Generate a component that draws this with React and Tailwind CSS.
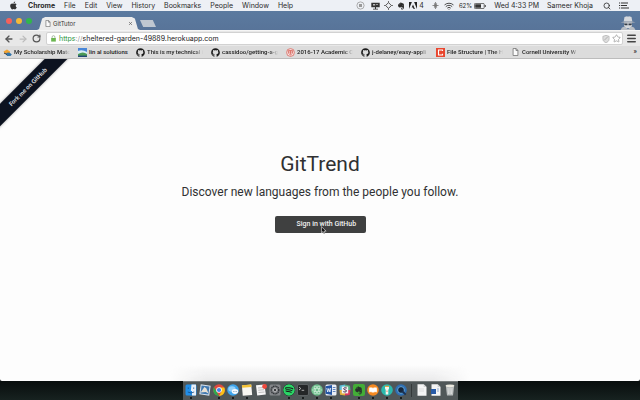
import React from "react";
import { FaApple, FaGithub, FaSpotify, FaEvernote, FaSlack } from "react-icons/fa";
import { ArrowLeft, ArrowRight, RotateCw, Star, Menu, Search, List, Wifi, X } from "lucide-react";

const menus = ["File", "Edit", "View", "History", "Bookmarks", "People", "Window", "Help"];

function PageIcon({ className = "" }) {
  return (
    <svg viewBox="0 0 8 10" className={className} fill="#fafafa" stroke="#666" strokeWidth="0.9">
      <path d="M1 .6h3.8L7 2.9v6.5H1zM4.6.8v2.3H7" />
    </svg>
  );
}

function MenuBar() {
  return (
    <header className="flex h-[11px] shrink-0 items-center justify-between bg-[#edf0f5] pl-[9px] pr-[11px] text-[7px] leading-none text-[#2a2a2a]">
      <nav className="flex items-center gap-[9px]">
        <button aria-label="Apple menu" className="mr-[1px] text-[#333]"><FaApple size={9} /></button>
        <button className="font-bold">Chrome</button>
        {menus.map((m) => <button key={m}>{m}</button>)}
      </nav>
      <div className="flex items-center gap-2">
        <div className="flex items-center gap-1">
          <svg viewBox="0 0 9 9" className="size-[9px]" fill="none" stroke="#999" strokeWidth=".8">
            <circle cx="4.5" cy="4.5" r="3.6" /><path fill="#999" stroke="none" d="M3 3h3v3H3z" />
          </svg>
          <svg viewBox="0 0 9 8" className="ml-[2px] h-2 w-[9px]" fill="#333">
            <path d="M.3.8h8.4v4.5H.3zM4 5.3h1v1.4H4zM2 6.7h5v.8H2z" />
            <path d="M2 2h2.2v1.5H2zM5 2h2v.7H5z" fill="#bbb" />
          </svg>
          <svg viewBox="0 0 9 9" className="size-[9px]" fill="none" stroke="#555" strokeWidth="1">
            <path d="M4.5 1.6 7.4 4.5 4.5 7.4 1.6 4.5z" /><path d="M4.5.2v1.4M4.5 7.4v1.4M.2 4.5h1.4M7.4 4.5h1.4" />
          </svg>
          <FaEvernote size={8} />
          <span className="flex items-center gap-[2px]">
            <svg viewBox="0 0 8 7" className="h-[7px] w-2" fill="#222">
              <path d="M0 0h2.9L0 7zM8 0H5.1L8 7zM4 2.5 5.9 7H4.6L4 5.5H2.7z" />
            </svg>
            4
          </span>
        </div>
        <div className="flex items-center gap-[5px]">
          <svg viewBox="0 0 8 8" className="size-[7px]" fill="none" stroke="#777" strokeWidth=".9">
            <path d="M4 .5v7M.5 4h7M2.5 2 4 .5 5.5 2M2.5 6 4 7.5 5.5 6" /><circle cx="4" cy="4" r="1.5" fill="#777" />
          </svg>
          <Wifi size={10} strokeWidth={2} />
          <div className="flex items-center gap-[2px] text-[6px]">
            62%
            <svg viewBox="0 0 12 6" className="h-[6px] w-3">
              <rect x=".4" y=".4" width="9.8" height="5.2" rx="1" fill="none" stroke="#444" strokeWidth=".8" />
              <path d="M1.2 1.2h5.8v3.6H1.2zM10.8 2h.9v2h-.9z" fill="#333" />
            </svg>
          </div>
        </div>
        <span>Wed 4:33 PM</span>
        <span>Sameer Khoja</span>
        <button aria-label="Search" className="ml-[2px]"><Search size={8} strokeWidth={2.4} /></button>
        <button aria-label="Notifications">
          <svg viewBox="0 0 10 7" className="h-[7px] w-[10px]" stroke="#333" strokeWidth="1">
            <path d="M0 1h1.2M2 1h7M0 3.5h1.2M2 3.5h6M0 6h1.2M2 6h8" />
          </svg>
        </button>
      </div>
    </header>
  );
}

function TabStrip() {
  return (
    <div className="flex h-[19px] shrink-0 items-end bg-linear-to-b from-[#5b7a9f] to-[#587499] pl-[6px] pr-1">
      <div className="mb-[6px] flex gap-1">
        <button aria-label="Close window" className="size-[6px] rounded-full bg-[#f5615b]" />
        <button aria-label="Minimise window" className="size-[6px] rounded-full bg-[#f5b938]" />
        <button aria-label="Zoom window" className="size-[6px] rounded-full bg-[#31b54c]" />
      </div>
      <div className="ml-[5px] flex h-[13px] w-[103px] items-center bg-[#ececec] pl-2 pr-[7px] text-[6px] text-[#333] [clip-path:polygon(0_100%,2%_92%,5%_12%,8%_0,92%_0,95%_12%,98%_92%,100%_100%)]">
        <PageIcon className="h-[7px] w-[6px]" />
        <span className="ml-[2px] flex-1">GitTutor</span>
        <button aria-label="Close tab"><X size={5} strokeWidth={3} className="text-[#555]" /></button>
      </div>
      <button aria-label="New tab" className="mb-[3px] h-[7px] w-4 bg-[#bfc7d1] [clip-path:polygon(0_0,80%_0,100%_100%,20%_100%)]" />
      <svg viewBox="0 0 16 14" className="ml-auto h-[14px] w-4">
        <path d="M4.5 1 7 .3l1 .5 1-.5 2.5.7.8 4.5H3.7z" fill="#d5d8dc" />
        <path d="M.5 6.2Q8 4.2 15.5 6.2 8 7.6.5 6.2z" fill="#aeb3ba" />
        <path d="M4 6.8h8v3L10.5 12h-5L4 9.8z" fill="#d5d8dc" />
        <path d="M4 7.5h3.5v1.7H4.6zM8.5 7.5H12l-.6 1.7H8.5z" fill="#333b46" />
        <path d="M.5 14 2 11.5l2.5-1L8 13l3.5-2.5 2.5 1 1.5 2.5z" fill="#b8bdc4" />
      </svg>
    </div>
  );
}

function Toolbar() {
  return (
    <div className="flex h-4 shrink-0 items-center border-t border-[#f5f5f5] bg-[#e8e8e8] pl-1 pr-[3px] text-[#555]">
      <button aria-label="Back"><ArrowLeft size={10} strokeWidth={3.2} /></button>
      <button aria-label="Forward" className="ml-1 text-[#bbb]"><ArrowRight size={10} strokeWidth={3} /></button>
      <button aria-label="Reload" className="ml-1"><RotateCw size={9} strokeWidth={3.2} /></button>
      <div className="ml-[5px] flex h-[13px] flex-1 items-center rounded-[2px] border border-[#d2d2d2] bg-white pl-1 pr-[1px] text-[7px] leading-none">
        <svg viewBox="0 0 6 8" className="h-[7px] w-[5px]">
          <path d="M1.3 4V2.3a1.7 1.7 0 0 1 3.4 0V4" fill="none" stroke="#8fa98a" strokeWidth=".9" />
          <path d="M.2 3.4h5.6v4.3H.2z" fill="#6cb651" />
        </svg>
        <a href="https://sheltered-garden-49889.herokuapp.com" className="ml-[3px] flex-1 text-[#222]">
          <span className="text-[#2a9440]">https</span><span className="text-[#999]">://</span>sheltered-garden-49889.herokuapp.com
        </a>
        <svg viewBox="0 0 8 9" className="h-2 w-2">
          <path d="M4 .4 7.5 1.5v3C7.5 6.8 5.8 8 4 8.7 2.2 8 .5 6.8.5 4.5v-3z" fill="#ddd" stroke="#aaa" strokeWidth=".7" />
          <path d="m2 6 4-4" stroke="#aaa" />
        </svg>
        <button aria-label="Bookmark this page" className="ml-[2px] text-[#999]"><Star size={9} strokeWidth={2} /></button>
      </div>
      <button aria-label="Chrome menu" className="ml-[3px] text-[#444]"><Menu size={11} strokeWidth={3.6} /></button>
    </div>
  );
}

const hub = <FaGithub size={9} className="text-[#1c1c1c]" />;
const bookmarks = [
  {
    label: "My Scholarship Matc", icon: (
      <svg viewBox="0 0 9 9" className="size-[9px]">
        <path d="M.5 3.5 4 1.5l3 2v2H2z" fill="#f2a330" /><path d="M3 5.5Q6 3 8.8 6.5L7.5 8H4z" fill="#3274a8" /><path d="m1 5 3 1.5" stroke="#333" />
      </svg>
    ),
  },
  {
    label: "lin al solutions", short: true, icon: (
      <svg viewBox="0 0 9 9" className="size-[9px]">
        <path d="M0 0h9v9H0z" fill="#4a86d8" /><path d="M0 3q4-2 9 1v2H0z" fill="#d9edf5" /><path d="M0 6q5-3 9 0v3H0z" fill="#4c9a56" /><path d="M0 7.6h9V9H0z" fill="#234877" />
      </svg>
    ),
  },
  { label: "This is my technical i", icon: hub },
  { label: "cassidoo/getting-a-g", icon: hub },
  {
    label: "2016-17 Academic C", icon: (
      <svg viewBox="0 0 9 9" className="size-[9px]" fill="none" stroke="#d8645c" strokeWidth=".8">
        <circle cx="4.5" cy="4.5" r="3.9" fill="#f8e6e4" /><path d="M2.4 2.5h4.2v2.7L4.5 7 2.4 5.2zM2.4 4h4.2M4.5 2.5v4" />
      </svg>
    ),
  },
  { label: "j-delaney/easy-appli", icon: hub },
  {
    label: "File Structure | The H", icon: (
      <svg viewBox="0 0 9 9" className="size-[9px]">
        <path d="M0 0h9v9H0z" fill="#e9472f" /><path d="M6.5 3V2h-4v5h4V5.8" fill="none" stroke="#fff" strokeWidth="1.1" />
      </svg>
    ),
  },
  { label: "Cornell University W", icon: <PageIcon className="h-2 w-[9px]" /> },
];

function Bookmarks() {
  return (
    <nav className="flex h-[13px] shrink-0 items-center gap-2 border-b border-[#bcbcbc] bg-[#dcdcdc] pl-[3px] pr-[3px] font-[Roboto,sans-serif] text-[6px] font-medium leading-none text-[#222]">
      {bookmarks.map((b) => (
        <a key={b.label} href="#" className="flex shrink-0 items-center gap-[2px]">
          {b.icon}
          {b.short ? (
            <span className="w-[39px] whitespace-nowrap">{b.label}</span>
          ) : (
            <span className="w-14 whitespace-nowrap py-[1px] [mask-image:linear-gradient(to_right,black_84%,transparent)]">{b.label}</span>
          )}
        </a>
      ))}
      <button aria-label="More bookmarks" className="ml-auto text-[7px]">»</button>
    </nav>
  );
}

function Page() {
  return (
    <main className="relative flex flex-1 flex-col items-center overflow-hidden rounded-b-[2px] bg-[#fdfdfd] pt-[91px] font-[Roboto,sans-serif] text-[#303132]">
      <a href="#" className="absolute -left-8 top-5 flex h-4 w-[120px] -rotate-45 items-center justify-center bg-[#0c1220] font-[Lato,sans-serif] text-[6px] font-bold leading-none text-[#e4e6ea] shadow-[0_0_3px_rgba(0,0,0,0.4)]">
        Fork me on GitHub
      </a>
      <h1 className="text-[21px] leading-7">GitTrend</h1>
      <p className="mt-1 text-[12px] leading-5">Discover new languages from the people you follow.</p>
      <button className="relative mt-[14px] flex h-[17px] w-[91px] items-center rounded-[2px] bg-[#3f4040] pl-[22px] text-[7px] font-medium leading-none text-[#f2f2f2]">
        Sign in with GitHub
        <svg viewBox="0 0 7 10" className="absolute left-[46px] top-[10px] h-[9px] w-[6px]">
          <path d="M.5.5v7.3l1.8-1.6 1.1 2.8 1.3-.6-1.1-2.6H6z" fill="#111" stroke="#eee" strokeWidth=".7" />
        </svg>
      </button>
      <div className="mt-auto h-4 w-[300px] bg-linear-to-b from-transparent to-[#e9e9ea] [mask-image:linear-gradient(to_right,transparent,black_12%,black_88%,transparent)]" />
    </main>
  );
}

const tile = (color, mark) => (
  <svg viewBox="0 0 12 12" className="size-3"><rect x=".5" y=".5" width="11" height="11" rx="1.5" fill={color} />{mark}</svg>
);
const disc = (color, mark) => (
  <svg viewBox="0 0 12 12" className="size-3"><circle cx="6" cy="6" r="5.8" fill={color} />{mark}</svg>
);

const apps = [
  ["Finder", tile("#218ee8", <><path d="M6.5.5H11v11H7V7H5.8z" fill="#e7eff8" /><path d="M3.3 3.5v1.3M8.7 3.5v1.3M2.8 8q3.2 2 6.4 0" stroke="#174b82" fill="none" strokeWidth=".8" /></>), true],
  ["Mail", <svg viewBox="0 0 12 12" className="size-3"><g transform="rotate(8 6 6)"><path d="M1 1h10v10H1z" fill="#d8e4ef" /><path d="M2 2h8v8H2z" fill="#4179b0" /><path d="m2 9 3-6 2 1 3 5-3-1z" fill="#e7e1d4" /></g></svg>],
  ["Chrome", disc("#e04a3f", <><path d="M1 3.1 6 12A6 6 0 0 1 1 3.1z" fill="#2da94f" /><path d="M6 12a6 6 0 0 0 5.3-8.5H6L8.5 7.5z" fill="#fbc116" /><circle cx="6" cy="6" r="2.8" fill="#fff" /><circle cx="6" cy="6" r="2.1" fill="#3f83ed" /></>), true],
  ["Messages", disc("#3da5ee", <><ellipse cx="5" cy="5" rx="3.7" ry="2.8" fill="#92d1fb" /><ellipse cx="8" cy="7.5" rx="3.2" ry="2.4" fill="#f5f9fc" /><path d="M6.3 7.5h3.4" stroke="#7da5c2" strokeDasharray=".8 .5" /></>), true],
  ["Notes", <svg viewBox="0 0 12 12" className="size-3"><g transform="rotate(-5 6 6)"><path d="M1.3 1h9.4v10.4H1.3z" fill="#f8f7f2" /><path d="M1.3.8h9.4v2.6H1.3z" fill="#f4c236" /></g></svg>, true],
  ["Reminders", <svg viewBox="0 0 12 12" className="size-3"><path d="M1 1.2 9.5.5l1.3 10-8.6 1z" fill="#f6f6f6" /><path d="m3 4 5-.4M3.2 6.2l6-.5M3.5 8.5l6-.5" stroke="#a5a5a5" strokeWidth=".7" /><circle cx="9.6" cy="2.5" r="2.4" fill="#ee493d" /></svg>],
  ["System Preferences", tile("#84878a", <><circle cx="6" cy="6" r="3.8" fill="none" stroke="#33373a" strokeWidth="1.5" strokeDasharray="1.2 .5" /><circle cx="6" cy="6" r="1.7" fill="#3a3d40" stroke="#ccc" strokeWidth=".7" /></>)],
  ["Spotify", <FaSpotify size={12} className="rounded-full bg-[#151c18] text-[#2bd466]" />, true],
  ["Terminal", tile("#242728", <><path d="m2 3 1.8 1.5L2 6M4.6 6.3h2.6" stroke="#d0d0d0" fill="none" strokeWidth=".8" /><rect x=".5" y=".5" width="11" height="11" rx="1.5" fill="none" stroke="#73787a" strokeWidth=".6" /></>), true],
  ["Atom", disc("#6fbf8d", <g fill="none" stroke="#d7f0df" strokeWidth=".6"><ellipse cx="6" cy="6" rx="4.5" ry="1.7" /><ellipse cx="6" cy="6" rx="4.5" ry="1.7" transform="rotate(60 6 6)" /><ellipse cx="6" cy="6" rx="4.5" ry="1.7" transform="rotate(120 6 6)" /></g>), true],
  ["Word", tile("#e9eef5", <><path d="M.5 2.2 7 1v10L.5 9.8z" fill="#2456a4" /><path d="m1.8 4 .9 4 1.1-3.5L4.9 8l.8-4" stroke="#fff" fill="none" strokeWidth=".8" /><path d="M7.8 3.5h2.7M7.8 5.5h2.7M7.8 7.5h2.7" stroke="#2456a4" strokeWidth=".7" /></>), true],
  ["Slack", (
    <svg viewBox="0 0 12 12" className="size-3">
      <path d="M.5 1.5 6 .5v5.5H.5z" fill="#5fc0d8" /><path d="m6 .5 5 1.2.5 4.3H6z" fill="#56b184" /><path d="M.5 6H6v5.5l-5-.8z" fill="#e2b03c" /><path d="M6 6h5.5l-.8 5-4.7.5z" fill="#d93a5d" />
      <path d="M2.8 2.6h6.4v6.8H2.8z" fill="#f4f2f2" /><path d="M7.8 4Q4.5 3.2 4.6 4.8C4.8 6.2 7.6 5.5 7.5 7 7.3 8.5 5 8 4.3 7.6" fill="none" stroke="#4b2f4d" strokeWidth="1" />
    </svg>
  )],
  ["Evernote", <span className="flex size-3 items-center justify-center rounded-[2px] bg-[#43ad37] text-[#26322a]"><FaEvernote size={9} /></span>, true],
  ["iBooks", disc("#f58a22", <path d="M2 3.8q2.2-1 4 .2 1.8-1.2 4-.2v4.5q-2.2-.8-4 .4-1.8-1.2-4-.4z" fill="#fff" stroke="#f7b36f" strokeWidth=".4" />), true],
  ["Flashlight", disc("#2bb9ad", <><path d="M4 3h4v1.5L7.3 6v4.5H4.7V6L4 4.5z" fill="#f4f5ed" /><path d="M4 1.8h4V3H4z" fill="#e1a845" /><path d="M5.6 6.5h.8v1.6h-.8z" fill="#d66a45" /></>), true],
  ["QuickTime", disc("#2f6fb4", <><circle cx="6" cy="6" r="3.4" fill="#17263c" stroke="#61a7dc" strokeWidth="1" /><path d="m7 7 3.7 3.7" stroke="#1b3050" strokeWidth="1.8" /></>), true],
];

const doc = (mark) => (
  <svg viewBox="0 0 12 12" className="size-3"><path d="M1.5.3h6.2l2.8 2.8v8.6h-9z" fill="#f4f4f4" /><path d="M7.7.3v2.8h2.8" fill="#cfcfcf" />{mark}</svg>
);

function Dock() {
  return (
    <footer className="flex h-[19px] shrink-0 justify-center bg-linear-to-b from-[#080d0d] to-[#172220]">
      <div className="flex items-start gap-[2px] border-t border-[#777c7c] bg-[#505758] px-[2px] pt-[2px]">
        {apps.map(([name, icon, open]) => (
          <button key={name} aria-label={name} className="flex flex-col items-center gap-[1px]">
            {icon}
            {open && <span className="size-[2px] rounded-full bg-[#090c0c]" />}
          </button>
        ))}
        <span className="mx-[2px] h-[13px] w-px bg-[#34393a]" />
        <button aria-label="Document">{doc(<path d="M3 5h5M3 7h5" stroke="#ccc" strokeWidth=".6" />)}</button>
        <button aria-label="Word document">{doc(<><path d="M1 5h5v5H1z" fill="#285aa6" /><path d="M7 5h2M7 7h2" stroke="#6c8dc0" strokeWidth=".7" /></>)}</button>
        <button aria-label="Trash">
          <svg viewBox="0 0 12 12" className="size-3">
            <path d="M1.8 1.5h8.4L9 11.5H3z" fill="#b9bdbd" /><ellipse cx="6" cy="1.8" rx="4.3" ry="1.4" fill="#ece9df" /><path d="m4 4 .5 6M8 4l-.5 6M6 4v6" stroke="#e6e6e6" strokeWidth=".7" />
          </svg>
        </button>
      </div>
    </footer>
  );
}

export default function App() {
  return (
    <div className="flex h-screen flex-col overflow-hidden bg-[#080d0d] font-[Inter,sans-serif]">
      <MenuBar />
      <TabStrip />
      <Toolbar />
      <Bookmarks />
      <Page />
      <Dock />
    </div>
  );
}
